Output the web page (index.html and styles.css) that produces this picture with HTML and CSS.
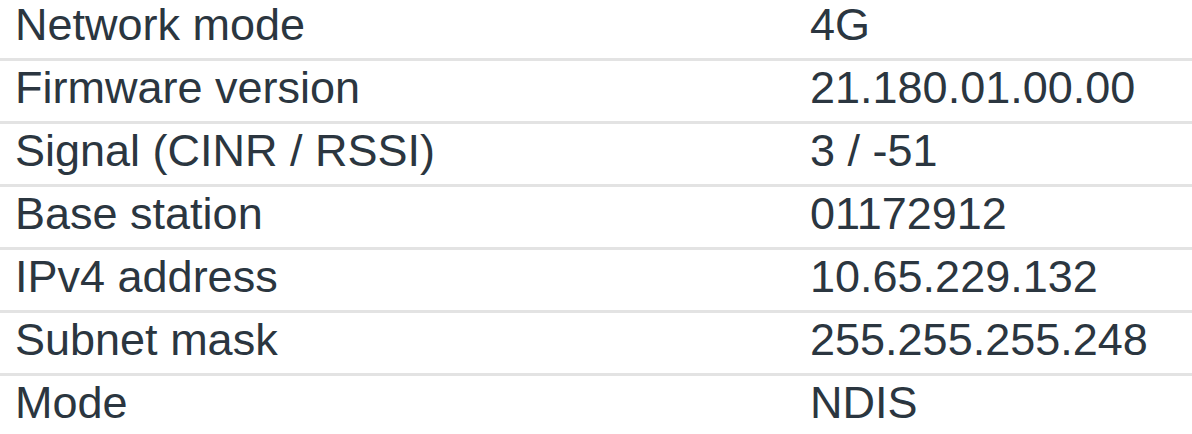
FILE: index.html
```html
<!DOCTYPE html>
<html>
<head>
<meta charset="utf-8">
<link rel="stylesheet" href="styles.css">
</head>
<body>
<table class="info">
  <tbody>
    <tr><td class="label">Network mode</td><td class="value">4G</td></tr>
    <tr><td class="label">Firmware version</td><td class="value">21.180.01.00.00</td></tr>
    <tr><td class="label">Signal (CINR / RSSI)</td><td class="value">3 / -51</td></tr>
    <tr><td class="label">Base station</td><td class="value">01172912</td></tr>
    <tr><td class="label">IPv4 address</td><td class="value">10.65.229.132</td></tr>
    <tr><td class="label">Subnet mask</td><td class="value">255.255.255.248</td></tr>
    <tr><td class="label">Mode</td><td class="value">NDIS</td></tr>
  </tbody>
</table>
</body>
</html>
```
FILE: styles.css
```css
html, body {
  margin: 0;
  padding: 0;
  background: #ffffff;
  overflow: hidden;
}

.info {
  width: 100%;
  border-collapse: collapse;
  margin-top: -2px;
  font-family: "Liberation Sans", Arial, sans-serif;
  font-size: 45px;
  color: #2b3640;
}

.info tr + tr td {
  border-top: 3px solid #e3e3e3;
}

.info td {
  height: 60px;
  box-sizing: border-box;
  padding: 0 0 6px 0;
  line-height: 54px;
  white-space: nowrap;
  vertical-align: top;
}

.label {
  width: 810px;
  padding-left: 15px !important;
}

.value {
  padding-left: 0;
}
```
